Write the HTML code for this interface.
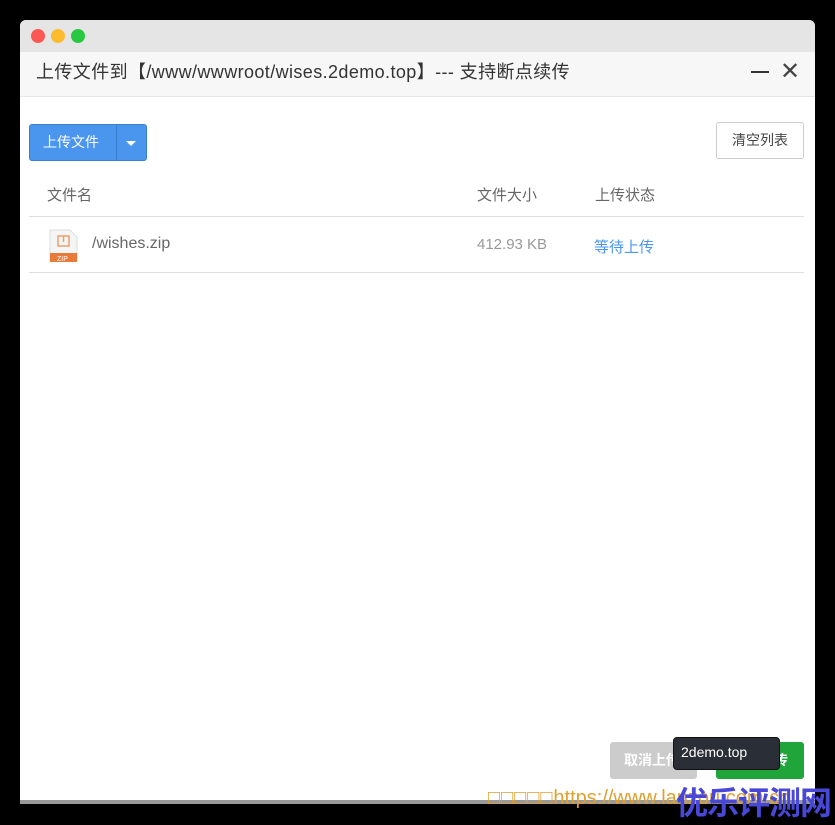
<!DOCTYPE html>
<html><head><meta charset="utf-8"><style>
*{margin:0;padding:0;box-sizing:border-box}
body{width:835px;height:825px;background:#000;position:relative;overflow:hidden;font-family:"Liberation Sans","Noto Sans CJK SC",sans-serif}
.win{position:absolute;left:20px;top:20px;width:795px;height:784px;background:#fff;border-radius:6px 6px 0 0;overflow:hidden}
.tb{height:32px;background:#e5e5e5}
.dot{position:absolute;top:9px;width:14px;height:14px;border-radius:50%}
.hd{position:absolute;top:32px;left:0;right:0;height:45px;background:#f7f7f7;border-bottom:1px solid #e6e6e6;font-size:18px;color:#333;line-height:40px;padding-left:16px;letter-spacing:0.4px}
.abs{position:absolute}
.th{font-size:15px;color:#666}
.line{position:absolute;left:9px;width:775px;height:1px;background:#ddd}
.bot{position:absolute;left:0;right:0;bottom:0;height:4px;background:#999}
</style></head><body>
<div class="win">
<div class="tb"></div>
<div class="dot" style="left:11px;background:#fd5753"></div>
<div class="dot" style="left:31px;background:#fdbb2f"></div>
<div class="dot" style="left:51px;background:#28c840"></div>
<div class="hd">上传文件到【/www/wwwroot/wises.2demo.top】--- 支持断点续传</div>
<div class="abs" style="left:731px;top:51px;width:18px;height:2px;background:#333"></div>
<div class="abs" style="left:760px;top:38px;font-size:24px;color:#444;line-height:28px">✕</div>
<div class="abs" style="left:9px;top:104px;width:118px;height:37px;background:#4a96ef;border:1px solid #3a7fcf;border-radius:3px;color:#fff;font-size:14px;line-height:35px;padding-left:13px">上传文件</div>
<div class="abs" style="left:96px;top:105px;width:1px;height:35px;background:#3a7fcf"></div>
<div class="abs" style="left:106px;top:121px;width:0;height:0;border-left:5px solid transparent;border-right:5px solid transparent;border-top:5px solid #fff"></div>
<div class="abs" style="left:696px;top:102px;width:88px;height:37px;border:1px solid #ccc;border-radius:3px;font-size:14px;color:#444;text-align:center;line-height:35px">清空列表</div>
<div class="abs th" style="left:27px;top:164px">文件名</div>
<div class="abs th" style="left:457px;top:164px">文件大小</div>
<div class="abs th" style="left:575px;top:164px">上传状态</div>
<div class="line" style="top:196px"></div>
<svg class="abs" style="left:29px;top:209px" width="29" height="33" viewBox="0 0 29 33"><path d="M1 1h20l7 7v24H1z" fill="#f5f5f5" stroke="#ddd"/><rect x="1" y="24" width="27" height="9" fill="#e87a3a"/><text x="8" y="32" font-size="7" fill="#fff" font-family="Liberation Sans">ZIP</text><rect x="9" y="7" width="11" height="10" fill="none" stroke="#e8a070" stroke-width="1.5"/><line x1="14.5" y1="7" x2="14.5" y2="13" stroke="#e8a070" stroke-width="1.5"/></svg>
<div class="abs" style="left:72px;top:215px;font-size:16px;color:#666">/wishes.zip</div>
<div class="abs" style="left:457px;top:216px;font-size:15px;color:#999">412.93 KB</div>
<div class="abs" style="left:574px;top:216px;font-size:15px;color:#4a96ef">等待上传</div>
<div class="line" style="top:252px"></div>
<div class="abs" style="left:590px;top:722px;width:87px;height:37px;background:#ccc;border-radius:3px;color:#fff;font-size:14px;font-weight:bold;line-height:37px;padding-left:14px">取消上传</div>
<div class="abs" style="left:696px;top:722px;width:88px;height:37px;background:#20a53a;border-radius:3px;color:#fff;font-size:14px;font-weight:bold;line-height:37px;text-align:center">开始上传</div>
<div class="abs" style="left:653px;top:717px;width:107px;height:33px;background:#2a2e36;border:1px solid #111;border-radius:4px;color:#fff;font-size:14px;padding:6px 0 0 7px">2demo.top</div>
<div class="bot"></div>
</div>
<div class="abs" style="left:488px;top:787px;font-size:20px;color:#e0a030;white-space:nowrap"><span style="letter-spacing:1px">□□□□□</span>https://www.lanzou.com.cn</div>
<div class="abs" style="left:676px;top:778px;font-size:32px;font-weight:bold;color:#4848d8;white-space:nowrap;letter-spacing:-1px">优乐评测网</div>
</body></html>
